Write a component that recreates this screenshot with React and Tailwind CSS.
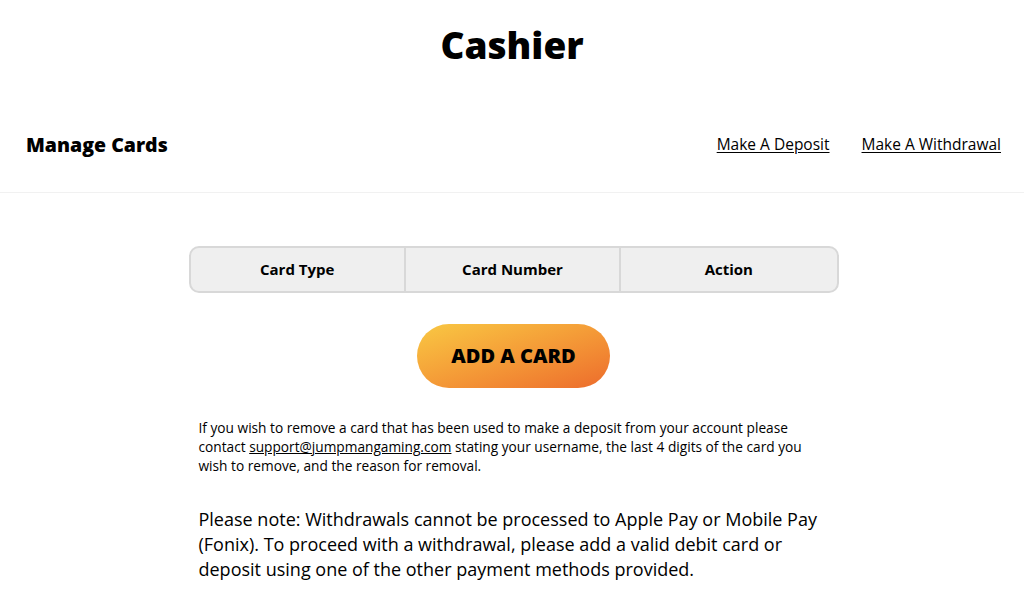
export default function App() {
  const font = { fontFamily: '"Open Sans", "DejaVu Sans", sans-serif' };
  return (
    <div className="min-h-screen w-full bg-white text-black" style={font}>
      <header className="flex justify-center pt-[22px] pb-[64px]">
        <h1 className="text-[37px] leading-[46px] font-extrabold">Cashier</h1>
      </header>

      <div className="flex items-center justify-between pl-[26px] pr-[23px] pb-[34px] border-b border-[#f1f1f1]">
        <h2 className="text-[19.5px] leading-[26px] font-extrabold">Manage Cards</h2>
        <nav className="flex items-center gap-[32px] text-[15.5px]">
          <a href="#" className="underline underline-offset-2">Make A Deposit</a>
          <a href="#" className="underline underline-offset-2">Make A Withdrawal</a>
        </nav>
      </div>

      <div className="flex justify-center pl-[3px]">
        <main className="w-[650px] pt-[53px]">
          <div className="grid grid-cols-3 rounded-[10px] border-2 border-[#d8d8d8] bg-[#efefef] h-[47px] overflow-hidden">
            <div className="flex items-center justify-center text-[15px] font-bold border-r-2 border-[#d8d8d8]">Card Type</div>
            <div className="flex items-center justify-center text-[15px] font-bold border-r-2 border-[#d8d8d8]">Card Number</div>
            <div className="flex items-center justify-center text-[15px] font-bold">Action</div>
          </div>

          <div className="flex justify-center pt-[31px]">
            <button className="w-[193px] h-[64px] rounded-full bg-gradient-to-br from-[#f8c843] to-[#ec6b2c] text-[20px] font-extrabold">
              ADD A CARD
            </button>
          </div>

          <p className="px-[10px] pt-[30px] text-[13.7px] leading-[19px]">
            If you wish to remove a card that has been used to make a deposit from your account please contact{' '}
            <a href="#" className="underline">support@jumpmangaming.com</a> stating your username, the last 4 digits of the card you wish to remove, and the reason for removal.
          </p>

          <p className="px-[10px] pt-[32px] text-[18px] leading-[25px]">
            Please note: Withdrawals cannot be processed to Apple Pay or Mobile Pay (Fonix). To proceed with a withdrawal, please add a valid debit card or deposit using one of the other payment methods provided.
          </p>
        </main>
      </div>
    </div>
  );
}
